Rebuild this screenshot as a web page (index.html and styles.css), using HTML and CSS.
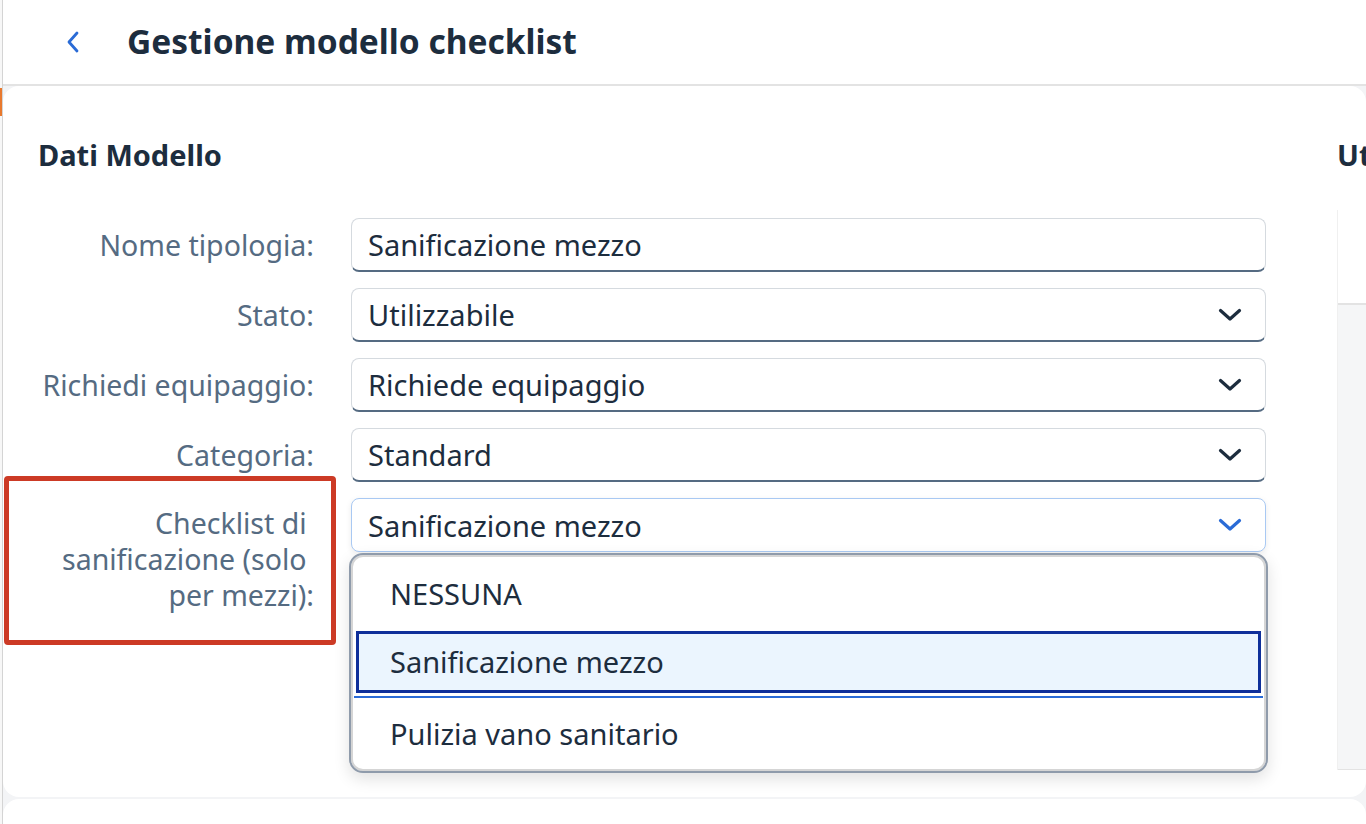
FILE: index.html
```html
<!DOCTYPE html>
<html>
<head>
  <meta charset="UTF-8">
  <title>Gestione modello checklist</title>
  <link rel="stylesheet" href="styles.css">
</head>
<body>
  <div class="app">
    <div class="rail"><div class="rail-mark"></div></div>

    <div class="main">
      <div class="header">
        <button class="back-button">
          <svg width="18" height="24" viewBox="0 0 18 24"><path d="M13 3 L5 12 L13 21" fill="none" stroke="#2a6bd6" stroke-width="2.8" stroke-linecap="round" stroke-linejoin="round"/></svg>
        </button>
        <div class="title">Gestione modello checklist</div>
      </div>

      <div class="page">
        <div class="card">
          <div class="form-panel">
            <div class="section-title">Dati Modello</div>

            <div class="form-grid">
              <div class="label">Nome tipologia:</div>
              <div class="field">
                <div class="input">Sanificazione mezzo</div>
              </div>

              <div class="label">Stato:</div>
              <div class="field">
                <div class="input select">Utilizzabile
                  <svg class="chevron" width="24" height="14" viewBox="0 0 24 14"><path d="M2.5 2.5 L12 11 L21.5 2.5" fill="none" stroke="#1d2d3e" stroke-width="3.2" stroke-linecap="round" stroke-linejoin="round"/></svg>
                </div>
              </div>

              <div class="label">Richiedi equipaggio:</div>
              <div class="field">
                <div class="input select">Richiede equipaggio
                  <svg class="chevron" width="24" height="14" viewBox="0 0 24 14"><path d="M2.5 2.5 L12 11 L21.5 2.5" fill="none" stroke="#1d2d3e" stroke-width="3.2" stroke-linecap="round" stroke-linejoin="round"/></svg>
                </div>
              </div>

              <div class="label">Categoria:</div>
              <div class="field">
                <div class="input select">Standard
                  <svg class="chevron" width="24" height="14" viewBox="0 0 24 14"><path d="M2.5 2.5 L12 11 L21.5 2.5" fill="none" stroke="#1d2d3e" stroke-width="3.2" stroke-linecap="round" stroke-linejoin="round"/></svg>
                </div>
              </div>

              <div class="label label-multi annotated">Checklist di&nbsp;<br>sanificazione (solo&nbsp;<br>per mezzi):</div>
              <div class="field">
                <div class="input select focused">Sanificazione mezzo
                  <svg class="chevron" width="24" height="14" viewBox="0 0 24 14"><path d="M2.5 2.5 L12 11 L21.5 2.5" fill="none" stroke="#2a6bd6" stroke-width="3.2" stroke-linecap="round" stroke-linejoin="round"/></svg>
                </div>
                <div class="popover">
                  <div class="option">NESSUNA</div>
                  <div class="option selected">Sanificazione mezzo</div>
                  <div class="option">Pulizia vano sanitario</div>
                </div>
              </div>
            </div>
          </div>

          <div class="side-panel">
            <div class="section-title">Utenti</div>
            <div class="side-box">
              <div class="side-top"></div>
              <div class="side-bottom"></div>
            </div>
          </div>
        </div>
        <div class="card card-next"></div>
      </div>
    </div>
  </div>
</body>
</html>
```

FILE: styles.css
```css
body {
  margin: 0;
  font-family: "Noto Sans", "Liberation Sans", sans-serif;
  background-color: #ffffff;
  color: #1d2d3e;
  overflow: hidden;
}

.app {
  display: flex;
  height: 824px;
}

.rail {
  width: 2px;
  border-right: 1px solid #d4d4d4;
  background: #f7f7f7;
  flex-shrink: 0;
}

.rail-mark {
  margin-top: 88px;
  height: 28px;
  background: #e8792e;
}

.main {
  flex: 1;
  display: flex;
  flex-direction: column;
  min-width: 0;
}

.header {
  height: 84px;
  border-bottom: 2px solid #e3e3e3;
  display: flex;
  align-items: center;
  background: #fff;
  flex-shrink: 0;
}

.back-button {
  border: none;
  background: none;
  padding: 0;
  margin-left: 60px;
  width: 20px;
  height: 24px;
  display: flex;
  align-items: center;
  justify-content: center;
}

.title {
  margin-left: 44px;
  font-size: 33.5px;
  font-weight: bold;
  color: #1d2d3e;
  margin-top: -2px;
}

.page {
  flex: 1;
  background: #f3f4f6;
  display: flex;
  flex-direction: column;
  gap: 2px;
  overflow: hidden;
}

.card {
  background: #fff;
  border-radius: 16px;
  height: 711px;
  flex-shrink: 0;
  display: flex;
}

.card-next {
  height: 40px;
}

.form-panel {
  width: 1300px;
  flex-shrink: 0;
}

.section-title {
  font-size: 29px;
  font-weight: bold;
  color: #1d2d3e;
  height: 36px;
  line-height: 36px;
  margin-top: 51px;
  margin-bottom: 45px;
  padding-left: 35px;
  white-space: nowrap;
}

.form-grid {
  display: grid;
  grid-template-columns: 311px 915px;
  column-gap: 37px;
  row-gap: 16px;
}

.label {
  text-align: right;
  font-size: 28.5px;
  color: #556b82;
  line-height: 54px;
  white-space: nowrap;
}

.label-multi {
  line-height: 36px;
  padding-top: 7px;
}

.annotated {
  position: relative;
}

.annotated::after {
  content: "";
  position: absolute;
  left: 1px;
  top: -22px;
  right: -22px;
  bottom: -32px;
  border: 5px solid #cc3a25;
  border-radius: 4px;
}

.field {
  position: relative;
}

.input {
  height: 54px;
  box-sizing: border-box;
  border: 1.5px solid #d5dadf;
  border-bottom: 2px solid #556b82;
  border-radius: 8px;
  background: #fff;
  padding: 0 16px;
  font-size: 29px;
  color: #1d2d3e;
  display: flex;
  align-items: center;
  justify-content: space-between;
}

.chevron {
  margin-right: 7px;
}

.input.focused {
  border: 1.5px solid #a9c9f3;
  box-shadow: 0 2px 6px rgba(0, 0, 0, 0.08);
}

.popover {
  position: absolute;
  top: 55px;
  left: -2px;
  right: -2px;
  background: #fff;
  border: 2px solid #8f9bab;
  border-radius: 14px;
  box-shadow: 0 6px 16px rgba(0, 0, 0, 0.12), inset 0 0 0 2px #d5d5d5;
  padding: 6px 5px 4px 5px;
  z-index: 10;
}

.option {
  height: 66px;
  line-height: 66px;
  padding-left: 34px;
  font-size: 29px;
  color: #1d2d3e;
}

.option.selected {
  position: relative;
  height: 62px;
  line-height: 56px;
  box-sizing: border-box;
  border: 3px solid #0e2f9a;
  background: #ebf5fe;
  padding-left: 31px;
  margin: 4px 0 8px 0;
}

.option.selected::after {
  content: "";
  position: absolute;
  left: -5px;
  right: -5px;
  bottom: -8px;
  height: 2px;
  background: #2a6bd6;
}

.side-panel {
  flex: 1;
  padding-left: 34px;
  min-width: 0;
  overflow: hidden;
}

.side-panel .section-title {
  padding-left: 0;
  margin-bottom: 37px;
}

.side-box {
  height: 560px;
  border-left: 1px solid #f0f0f0;
  display: flex;
  flex-direction: column;
}

.side-top {
  height: 93px;
  background: #fff;
  border-bottom: 2px solid #e3e3e3;
}

.side-bottom {
  flex: 1;
  background: #f5f6f7;
  border-bottom: 1px solid #e3e3e3;
}
```
